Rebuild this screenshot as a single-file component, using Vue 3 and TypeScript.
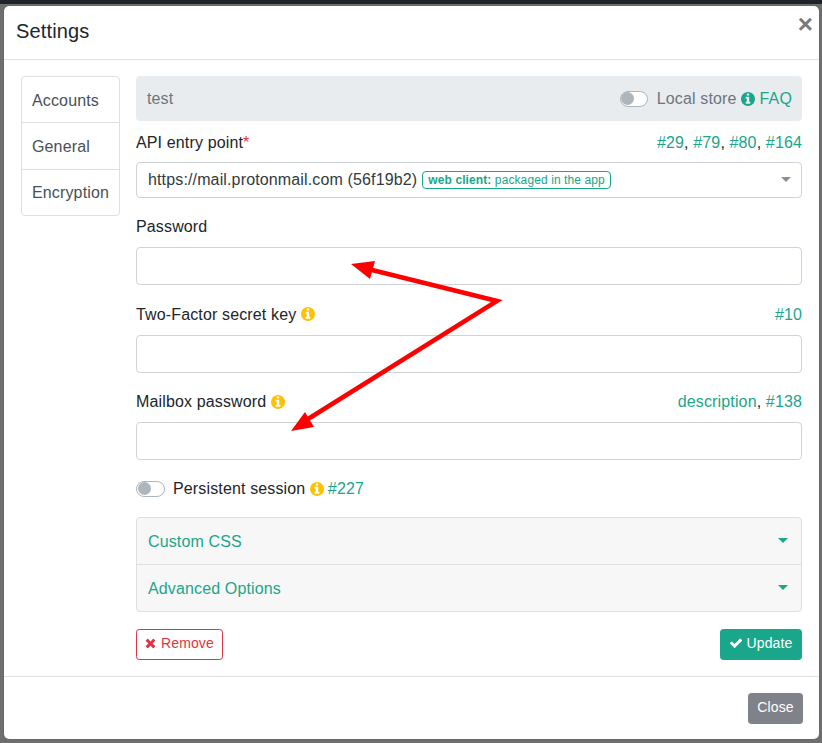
<script setup lang="ts">
const infoPath =
  'M1024 1376v-160q0-14-9-23t-23-9h-96v-512q0-14-9-23t-23-9H544q-14 0-23 9t-9 23v160q0 14 9 23t23 9h96v320h-96q-14 0-23 9t-9 23v160q0 14 9 23t23 9h448q14 0 23-9t9-23zM896 480V320q0-14-9-23t-23-9H672q-14 0-23 9t-9 23v160q0 14 9 23t23 9h192q14 0 23-9t9-23zm640 416q0 209-103 385.5T1153.5 1561 768 1664t-385.5-103T103 1281.5 0 896t103-385.5T382.5 231 768 128t385.5 103T1433 510.5 1536 896z'
const navItems: string[] = ['Accounts', 'General', 'Encryption']
const apiLinks: string[] = ['#29', '#79', '#80', '#164']
</script>

<template>
  <div class="page">
    <div class="topstrip"></div>
    <div class="modal">
      <header class="modal-header">
        <h5 class="title">Settings</h5>
        <span class="close">×</span>
      </header>
      <div class="modal-body">
        <nav class="nav">
          <div v-for="item in navItems" :key="item" class="nav-item">{{ item }}</div>
        </nav>
        <main class="main">
          <div class="bar">
            <span class="bar-name">test</span>
            <span class="bar-right">
              <span class="toggle toggle-bar"><i class="knob"></i></span>
              <span>Local store</span>
              <svg class="info info-teal" viewBox="0 128 1536 1536"><path :d="infoPath" /></svg>
              <a class="link">FAQ</a>
            </span>
          </div>

          <div class="label-row first">
            <span>API entry point<span class="req">*</span></span>
            <span>
              <template v-for="(l, i) in apiLinks" :key="l"><a class="link">{{ l }}</a><span v-if="i < apiLinks.length - 1">, </span></template>
            </span>
          </div>
          <div class="select">
            <span>https://mail.protonmail.com (56f19b2)</span>
            <span class="badge"><b>web client:</b> packaged in the app</span>
            <i class="select-caret"></i>
          </div>

          <div class="label-row group flush">
            <span>Password</span>
          </div>
          <div class="input"></div>

          <div class="label-row group">
            <span class="with-icon">
              <span>Two-Factor secret key</span>
              <svg class="info info-amber" viewBox="0 128 1536 1536"><path :d="infoPath" /></svg>
            </span>
            <a class="link">#10</a>
          </div>
          <div class="input"></div>

          <div class="label-row group">
            <span class="with-icon">
              <span>Mailbox password</span>
              <svg class="info info-amber" viewBox="0 128 1536 1536"><path :d="infoPath" /></svg>
            </span>
            <span><a class="link">description</a>, <a class="link">#138</a></span>
          </div>
          <div class="input"></div>

          <div class="persist">
            <span class="toggle"><i class="knob"></i></span>
            <span class="persist-label">Persistent session</span>
            <svg class="info info-amber" viewBox="0 128 1536 1536"><path :d="infoPath" /></svg>
            <a class="link">#227</a>
          </div>

          <div class="accordion">
            <div class="acc-item"><a class="link">Custom CSS</a><i class="acc-caret"></i></div>
            <div class="acc-item"><a class="link">Advanced Options</a><i class="acc-caret"></i></div>
          </div>

          <div class="actions">
            <button class="btn btn-remove" type="button">
              <svg class="ico-x" viewBox="0 0 1408 1792"><path d="M1298 1322q0 40-28 68l-136 136q-28 28-68 28t-68-28L704 1232l-294 294q-28 28-68 28t-68-28l-136-136q-28-28-28-68t28-68l294-294-294-294q-28-28-28-68t28-68l136-136q28-28 68-28t68 28l294 294 294-294q28-28 68-28t68 28l136 136q28 28 28 68t-28 68l-294 294 294 294q28 28 28 68z" /></svg>
              <span>Remove</span>
            </button>
            <button class="btn btn-update" type="button">
              <svg class="ico-check" viewBox="0 0 1792 1792"><path d="M1671 566q0 40-28 68l-724 724-136 136q-28 28-68 28t-68-28l-136-136-362-362q-28-28-28-68t28-68l136-136q28-28 68-28t68 28l294 295 656-657q28-28 68-28t68 28l136 136q28 28 28 68z" /></svg>
              <span>Update</span>
            </button>
          </div>
        </main>
      </div>
      <footer class="modal-footer">
        <button class="btn btn-close" type="button">Close</button>
      </footer>
    </div>

    <svg class="annotation" viewBox="0 0 822 743" width="822" height="743">
      <path d="M368 269 L497 301 L308 419" fill="none" stroke="#ff0000" stroke-width="4.5" stroke-linejoin="miter" />
      <polygon points="351,264 375,261 370,279" fill="#ff0000" />
      <polygon points="291,431 305,412 314,427" fill="#ff0000" />
    </svg>
  </div>
</template>

<style>
html, body { margin: 0; background: #6e6e6e; }
</style>

<style scoped>
.page {
  position: relative;
  width: 822px;
  height: 743px;
  overflow: hidden;
  background: #6e6e6e;
  font-family: "Liberation Sans", Arial, sans-serif;
  font-size: 16px;
  line-height: 24px;
  letter-spacing: .14px;
  color: #212529;
}
.topstrip { height: 4px; background: #20242a; }
.modal {
  box-sizing: border-box;
  width: 815px;
  height: 733px;
  margin: 2px 0 0 4px;
  background: #fff;
  border-radius: 5px;
  box-shadow: 0 0 1px rgba(0, 0, 0, .5);
  display: flex;
  flex-direction: column;
}
.modal-header {
  position: relative;
  flex: none;
  box-sizing: border-box;
  height: 54px;
  padding: 13px 12px 0;
  border-bottom: 1px solid #dee2e6;
}
.title { margin: 0; font-size: 20px; line-height: 24px; font-weight: 400; }
.close {
  position: absolute;
  top: 0;
  right: 6px;
  font-size: 26px;
  line-height: 36px;
  font-weight: 700;
  color: #7a7a7a;
}
.modal-body {
  flex: 1;
  min-height: 0;
  display: flex;
  gap: 16px;
  padding: 16px 17px 16px 17px;
}
.nav {
  box-sizing: border-box;
  width: 99px;
  height: 140px;
  flex: none;
  border: 1px solid #dfdfdf;
  border-radius: 4px;
  color: #495057;
}
.nav-item {
  box-sizing: border-box;
  height: 46.3px;
  padding: 11.6px 10px 0;
  border-bottom: 1px solid #dfdfdf;
}
.nav-item:last-child { border-bottom: 0; padding-top: 11px; }
.main { flex: 1; min-width: 0; }
.bar {
  box-sizing: border-box;
  height: 45px;
  padding: 1px 10px 0 11px;
  display: flex;
  align-items: center;
  justify-content: space-between;
  background: #e9ecef;
  border-radius: 4px;
  color: #6c757d;
}
.bar-right { display: flex; align-items: center; }
.toggle {
  box-sizing: border-box;
  display: inline-block;
  position: relative;
  width: 29px;
  height: 16px;
  border: 1px solid #adb5bd;
  border-radius: 8px;
  background: #fff;
  flex: none;
}
.toggle-bar { width: 28px; margin-right: 9px; margin-top: -1px; }
.knob {
  position: absolute;
  left: .5px;
  top: .5px;
  width: 13px;
  height: 13px;
  border-radius: 50%;
  background: #adb5bd;
}
.info { width: 14px; height: 14px; flex: none; }
.info path { fill: currentColor; }
.info-teal { color: #1aa68a; margin: -1px 5px 0 4px; }
.info-amber { color: #ffc107; }
.link { color: #1aa68a; text-decoration: none; }
.label-row {
  box-sizing: border-box;
  display: flex;
  justify-content: space-between;
  padding-top: .5px;
  height: 24px;
  margin-bottom: 8px;
}
.label-row.first { margin-top: 9px; }
.label-row.group { margin-top: 17.3px; }
.label-row.flush { padding-top: 0; }
.with-icon { display: inline-flex; align-items: center; gap: 4.5px; }
.with-icon .info { margin-top: -1px; }
.req { color: #dc3545; }
.select {
  box-sizing: border-box;
  position: relative;
  height: 36px;
  padding: 0 11px;
  display: flex;
  align-items: center;
  gap: 5px;
  border: 1px solid #ced4da;
  border-radius: 4px;
  color: #343a40;
}
.badge {
  box-sizing: border-box;
  height: 18px;
  padding: 0 5px;
  border: 1px solid #1aa68a;
  border-radius: 4px;
  font-size: 12px;
  line-height: 16px;
  letter-spacing: .1px;
  color: #1aa68a;
}
.select-caret {
  position: absolute;
  right: 10px;
  top: 14px;
  border-style: solid;
  border-width: 5px 5px 0;
  border-color: #8f8f8f transparent transparent;
}
.input {
  box-sizing: border-box;
  height: 38px;
  border: 1px solid #ced4da;
  border-radius: 4px;
}
.persist {
  display: flex;
  align-items: center;
  margin-top: 17px;
  height: 24px;
}
.persist .toggle { margin-right: 8px; }
.persist-label { margin-right: 4.5px; padding-top: 1px; }
.persist .info { margin-right: 4px; }
.persist .link { padding-top: 1px; }
.accordion {
  margin-top: 16px;
  border: 1px solid #dfdfdf;
  border-radius: 4px;
  background: #f7f7f7;
}
.acc-item {
  box-sizing: border-box;
  position: relative;
  height: 47px;
  padding: 12.5px 11px 0;
  border-bottom: 1px solid #dfdfdf;
}
.acc-item:last-child { border-bottom: 0; height: 46px; padding-top: 12px; }
.acc-caret {
  position: absolute;
  right: 13px;
  top: 20px;
  border-style: solid;
  border-width: 5px 5.5px 0;
  border-color: #1aa68a transparent transparent;
}
.actions {
  display: flex;
  justify-content: space-between;
  margin-top: 17px;
}
.btn {
  box-sizing: border-box;
  height: 31px;
  padding: 0 8px 2px;
  display: inline-flex;
  align-items: center;
  gap: 4px;
  border: 1px solid transparent;
  border-radius: 3.2px;
  font-family: inherit;
  font-size: 14px;
  line-height: 21px;
  letter-spacing: .12px;
}
.btn svg { fill: currentColor; height: 14px; }
.ico-x { width: 11px; }
.ico-check { width: 14px; }
.btn-remove { width: 87px; gap: 5px; background: #fff; color: #dc3545; border-color: #dc3545; }
.btn-update { width: 82px; gap: 3.5px; background: #1aa68a; color: #fff; border-color: #1aa68a; }
.btn-close { width: 55px; justify-content: center; background: #7f8289; color: #fff; border-color: #7f8289; }
.modal-footer {
  flex: none;
  box-sizing: border-box;
  height: 63px;
  padding: 16px 16px 0;
  border-top: 1px solid #dee2e6;
  display: flex;
  justify-content: flex-end;
}
.annotation { position: absolute; left: 0; top: 0; pointer-events: none; }
</style>
